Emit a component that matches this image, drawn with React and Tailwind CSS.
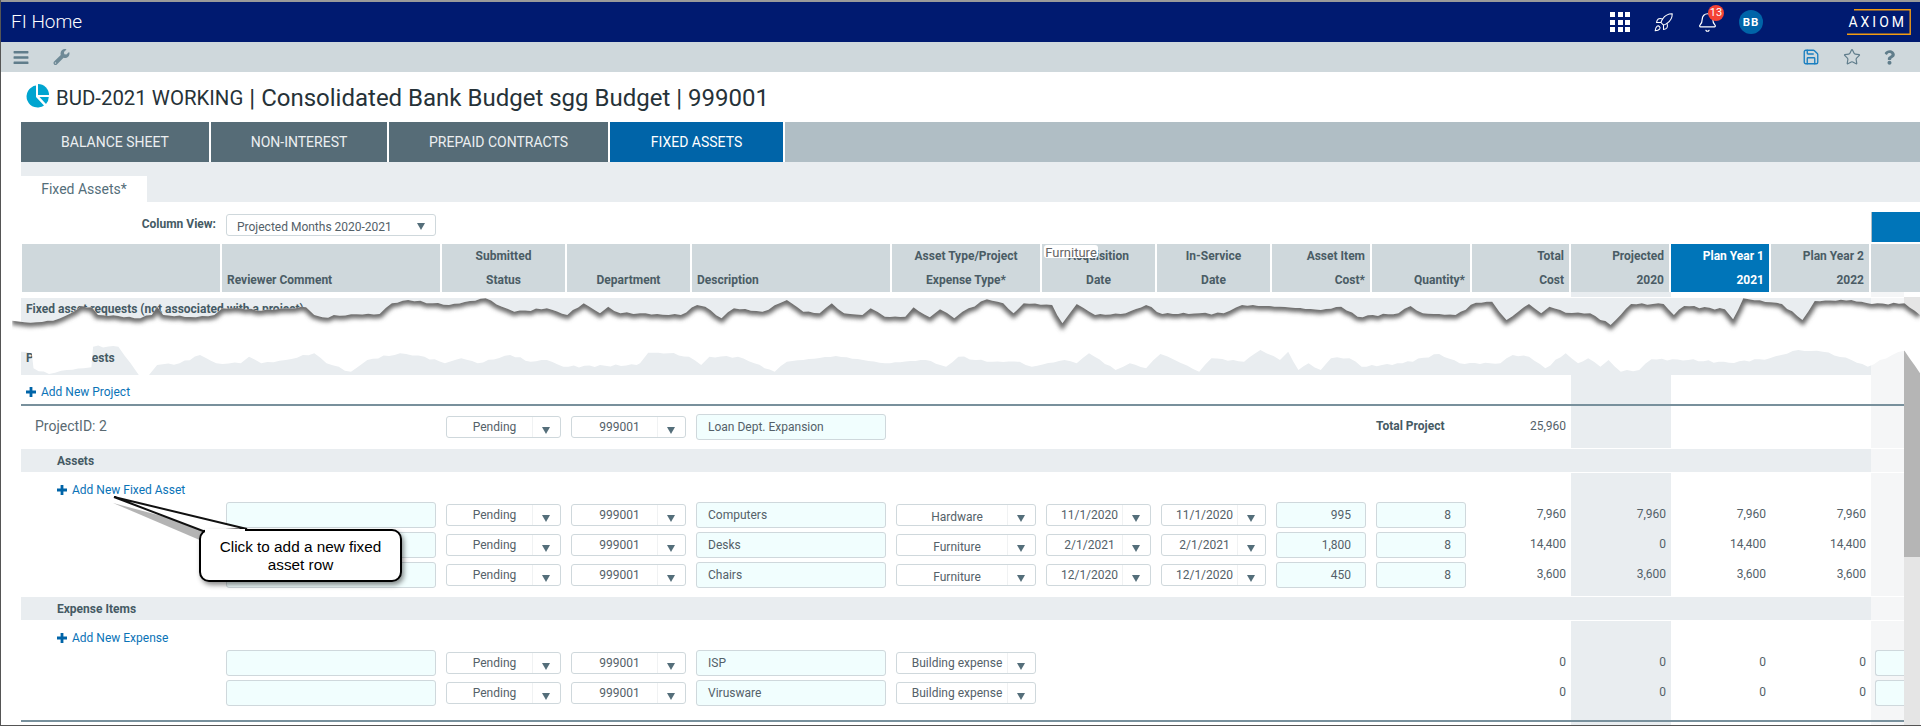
import React from "react";
import { Rocket, Bell, Save, Star } from "lucide-react";
import { FaBars, FaWrench, FaQuestion } from "react-icons/fa";

const G = "grid grid-cols-[201px_220px_125px_125px_200px_150px_115px_115px_100px_100px_99px_100px_100px_100px_1fr]";
const SHADE = "bg-[#e9edf0]";
const LIGHT = "bg-[#f5f6f7]";

const topEdge = [
  [0, [[30,362],[75,368],[130,362],[165,345],[200,318],[225,322],[240,345],[290,348],[330,355],[372,345],[385,320],[400,345],[480,352],[525,345],[545,325],[590,325],[640,332],[700,325],[750,322],[770,345],[790,352],[860,343],[930,342],[960,310],[1000,300],[1060,310],[1100,315],[1190,295],[1230,320],[1260,335],[1340,325],[1390,345],[1430,310],[1470,340],[1490,320],[1520,340]]],
  [640, [[0,340],[70,345],[100,345],[140,315],[160,320],[200,355],[230,325],[300,335],[360,300],[400,335],[440,340],[470,310],[500,340],[545,345],[565,325],[600,350],[650,350],[670,322],[710,352],[735,328],[770,355],[790,335],[850,298],[890,310],[915,340],[940,310],[1010,315],[1035,370],[1070,312],[1115,345],[1190,340],[1240,315],[1280,342],[1370,340],[1430,340],[1475,315]]],
  [1280, [[0,320],[100,330],[150,320],[190,350],[290,340],[320,318],[350,340],[430,345],[480,308],[520,305],[555,360],[610,312],[640,340],[660,320],[700,338],[760,340],[810,375],[860,312],[940,312],[965,345],[990,318],[1090,328],[1110,358],[1135,295],[1230,312],[1280,360],[1310,303],[1400,300],[1450,312],[1530,310],[1568,345]]],
];
const bottomEdge = [
  [0, [[30,450],[51,455],[78,460],[82,505],[120,522],[150,512],[205,505],[224,502],[228,440],[290,440],[320,490],[340,525],[365,525],[385,495],[440,490],[490,465],[530,490],[590,490],[610,470],[640,490],[700,480],[770,460],[800,490],[860,515],[900,480],[980,460],[1040,470],[1090,490],[1130,475],[1170,490],[1250,465],[1300,485],[1340,480],[1380,500],[1560,495]]],
  [640, [[0,490],[20,458],[70,460],[120,470],[150,495],[170,470],[240,470],[280,490],[330,515],[360,485],[480,468],[600,490],[700,480],[750,500],[780,470],[850,485],[930,485],[960,500],[1040,480],[1070,490],[1100,460],[1165,510],[1200,490],[1240,505],[1275,462],[1310,480],[1370,515],[1400,475],[1480,485],[1520,450]]],
  [1280, [[0,480],[20,455],[45,510],[70,490],[100,510],[125,475],[170,475],[200,500],[300,490],[390,462],[440,490],[540,490],[570,465],[610,470],[650,505],[700,460],[730,490],[755,475],[785,500],[805,480],[835,515],[880,510],[910,478],[1000,480],[1100,488],[1200,475],[1270,450],[1330,455],[1400,480],[1440,500],[1500,465],[1530,452],[1568,520]]],
];
const mapEdge = (e) =>
  e.flatMap(([ox, pts]) => pts.map(([x, y]) => [+(ox + x / 2.45 - 1).toFixed(1), +(200 + y / 3 - 298).toFixed(1)]));
// adds fine, repeatable roughness between the traced points of a torn edge
const roughen = (pts) => {
  const out = [];
  pts.forEach((p, i) => {
    out.push(p);
    const n = pts[i + 1];
    if (!n) return;
    const steps = Math.floor((n[0] - p[0]) / 5);
    for (let s = 1; s < steps; s++) {
      const t = s / steps;
      const noise = Math.sin(p[0] * 0.37 + s * 2.3) * 0.7 + Math.sin(p[0] * 1.3 + s * 4.1) * 0.4;
      out.push([+(p[0] + (n[0] - p[0]) * t).toFixed(1), +(p[1] + (n[1] - p[1]) * t + noise).toFixed(1)]);
    }
  });
  return out;
};
const topPts = roughen(mapEdge(topEdge));
const botPts = roughen(mapEdge(bottomEdge));
const str = (p) => p.map((q) => q.join(",")).join(" ");

function TornPaper() {
  const poly = str([...topPts, ...[...botPts].reverse()]);
  return (
    <svg className="absolute left-0 top-[6px] pointer-events-none" width="1919" height="78" viewBox="0 0 1919 78">
      <defs>
        <clipPath id="tornClip"><polygon points={poly} /></clipPath>
        <filter id="tornBlur" x="-2%" y="-100%" width="104%" height="300%"><feGaussianBlur stdDeviation="2.2" /></filter>
      </defs>
      <polygon points={poly} fill="#ffffff" />
      <g clipPath="url(#tornClip)">
        <polyline points={str(topPts)} fill="none" stroke="#6a6a6a" strokeWidth="8" filter="url(#tornBlur)" />
      </g>
    </svg>
  );
}

function Arrow() {
  return (
    <svg width="8" height="7" viewBox="0 0 8 7" className="mt-[6px] mr-[2px]"><path d="M0 0H8L4 7Z" fill="#546e7a" /></svg>
  );
}

function Plus() {
  return (
    <svg width="10" height="10" viewBox="0 0 10 10" className="mt-[3px] mr-[5px] shrink-0"><path d="M3.6 0H6.4V3.6H10V6.4H6.4V10H3.6V6.4H0V3.6H3.6Z" fill="#0064a8" /></svg>
  );
}

function Sel({ text, low }) {
  return (
    <div className="flex h-[22px] mt-[4px] w-full items-stretch rounded-[3px] border border-[#cfd8dc] bg-white">
      <div className={"flex flex-1 items-center justify-center pl-[10px] whitespace-nowrap " + (low ? "pt-[3px]" : "")}>{text}</div>
      <div className="flex w-[28px] shrink-0 items-center justify-center border-l border-[#f0f2f3]"><Arrow /></div>
    </div>
  );
}

function Inp({ text, right, cls = "" }) {
  return (
    <div className={"flex h-[26px] mt-[2px] w-full items-center rounded-[3px] border border-[#cfd8dc] bg-[#f1fefe] " + (right ? "justify-end pr-[14px] " : "pl-[11px] ") + cls}>{text}</div>
  );
}

const Val = ({ v, shade }) => (
  <div className={"flex h-full items-start justify-end pt-[6px] pr-[5px] leading-[16px] " + (shade ? SHADE : "")}>{v}</div>
);
const C = ({ children }) => <div className="pl-[4px] pr-[6px]">{children}</div>;

function AssetRow({ r }) {
  return (
    <div className={G + " h-[30px]"}>
      <div />
      <C><Inp /></C>
      <C><Sel text="Pending" /></C>
      <C><Sel text="999001" /></C>
      <C><Inp text={r.d} /></C>
      <C><Sel text={r.t} low /></C>
      <C><Sel text={r.a} /></C>
      <C><Sel text={r.a} /></C>
      <C><Inp text={r.c} right /></C>
      <C><Inp text="8" right /></C>
      <Val v={r.v[0]} />
      <Val v={r.v[1]} shade />
      <Val v={r.v[2]} />
      <Val v={r.v[3]} />
      <div className={LIGHT} />
    </div>
  );
}

function ExpenseRow({ d }) {
  return (
    <div className={G + " h-[30px]"}>
      <div />
      <C><Inp /></C>
      <C><Sel text="Pending" /></C>
      <C><Sel text="999001" /></C>
      <C><Inp text={d} /></C>
      <C><Sel text="Building expense" /></C>
      <div /><div /><div /><div />
      <Val v="0" />
      <Val v="0" shade />
      <Val v="0" />
      <Val v="0" />
      <div className={"pl-[4px] " + LIGHT}><Inp cls="rounded-r-none border-r-0" /></div>
    </div>
  );
}

function Section({ title }) {
  return (
    <div className={G + " h-[23px] mt-[1px] mb-[1px]"}>
      <div className={"col-span-14 flex items-center pl-[36px] font-bold text-[#455a64] " + SHADE}>{title}</div>
      <div className={LIGHT} />
    </div>
  );
}

function AddRow({ label, h }) {
  return (
    <div className={G + " " + h}>
      <div className="col-span-11 flex items-start pl-[36px] pt-[9px] leading-[16px] text-[#0a73b7]">
        <Plus />
        {label}
      </div>
      <div className={SHADE} />
      <div />
      <div />
      <div className={LIGHT} />
    </div>
  );
}

const Spacer = ({ h }) => (
  <div className={G + " " + h}>
    <div className="col-span-11" />
    <div className={SHADE} />
    <div />
    <div />
    <div className={LIGHT} />
  </div>
);

const heads = [
  ["", "", ""],
  ["", "Reviewer Comment", "text-left"],
  ["Submitted", "Status", "text-center"],
  ["", "Department", "text-center"],
  ["", "Description", "text-left"],
  ["Asset Type/Project", "Expense Type*", "text-center"],
  ["Acquisition", "Date", "text-center"],
  ["In-Service", "Date", "text-center"],
  ["Asset Item", "Cost*", "text-right"],
  ["", "Quantity*", "text-right"],
  ["Total", "Cost", "text-right"],
  ["Projected", "2020", "text-right"],
  ["Plan Year 1", "2021", "text-right"],
  ["Plan Year 2", "2022", "text-right"],
  ["", "", ""],
];

const assets = [
  { d: "Computers", t: "Hardware", a: "11/1/2020", c: "995", v: ["7,960", "7,960", "7,960", "7,960"] },
  { d: "Desks", t: "Furniture", a: "2/1/2021", c: "1,800", v: ["14,400", "0", "14,400", "14,400"] },
  { d: "Chairs", t: "Furniture", a: "12/1/2020", c: "450", v: ["3,600", "3,600", "3,600", "3,600"] },
];

export default function App() {
  return (
    <div className="relative h-[726px] w-full overflow-hidden border-b border-l border-[#555555] bg-white text-[12px] leading-[16px] text-[#546169] [font-family:Roboto,sans-serif]">
      <div className="h-[2px] bg-[#9a9a9a] mr-[1px]" />
      {/* top bar */}
      <div className="mr-[1px] flex h-[40px] items-center bg-[#001a70] text-white">
        <div className="pl-[10px] text-[19px] font-light">FI Home</div>
        <div className="ml-auto grid w-[20px] grid-cols-3 gap-[2.5px]">
          {Array.from({ length: 9 }).map((_, i) => <div key={i} className="h-[5px] w-[5px] bg-white" />)}
        </div>
        <Rocket className="ml-[23px] h-[21px] w-[21px]" strokeWidth={1.2} />
        <div className="relative ml-[23px] h-[20px] w-[20px]">
          <Bell className="h-[21px] w-[21px]" strokeWidth={1.4} />
          <div className="absolute -right-[7px] -top-[7px] flex h-[16px] w-[16px] items-center justify-center rounded-full bg-[#f44336] text-[11px] text-white">13</div>
        </div>
        <div className="ml-[22px] flex h-[24px] w-[24px] items-center justify-center rounded-full bg-[#0064a8] text-[11.5px] font-bold tracking-[1px]">BB</div>
        <div className="relative ml-[84px] mr-[9px] flex h-[26px] w-[64px] items-center justify-end pr-[4px] text-[14px] tracking-[3px]">
          <svg className="absolute left-0 top-0" width="64" height="26" viewBox="0 0 64 26" fill="none">
            <path d="M7 .7H63.2V25.2H0" stroke="#f39c12" strokeWidth="1.4" />
          </svg>
          AXIOM
        </div>
      </div>
      {/* toolbar */}
      <div className="mr-[1px] flex h-[30px] items-center bg-[#cfd8dc] text-[#607d8b]">
        <FaBars className="ml-[12px] h-[17px] w-[16px]" />
        <FaWrench className="ml-[24px] h-[16px] w-[17px] text-[#6f8a97]" />
        <Save className="ml-auto h-[18px] w-[18px] text-[#1a7fc0]" strokeWidth={1.8} />
        <Star className="ml-[23px] h-[18px] w-[18px]" strokeWidth={1.6} />
        <FaQuestion className="ml-[23px] mr-[25px] h-[15px] w-[11px]" />
      </div>
      {/* title */}
      <div className="flex h-[50px] items-center pl-[25px] pt-[1px] text-[#263238]">
        <svg width="23" height="24" viewBox="0 0 23 24" className="mb-[3px] mr-[7px]">
          <path d="M10 1.6A11 11 0 1 0 18 21.4L10 13Z" fill="#00a5d0" />
          <path d="M12 0A11 11 0 0 1 23 11H12Z" fill="#00a5d0" />
          <path d="M13.5 13H22.8A11 11 0 0 1 20 20Z" fill="#00a5d0" />
        </svg>
        <span className="text-[20.4px] leading-[26px]">BUD-2021 WORKING</span>
        <span className="ml-[6px] text-[24px] leading-[26px]">| Consolidated Bank Budget sgg Budget | 999001</span>
      </div>
      {/* main tabs */}
      <div className="mr-[1px] ml-[20px] flex h-[40px] gap-[2px] text-[14px] text-[#eceff1]">
        <div className="flex w-[188px] items-center justify-center bg-[#566c77]">BALANCE SHEET</div>
        <div className="flex w-[176px] items-center justify-center bg-[#566c77]">NON-INTEREST</div>
        <div className="flex w-[219px] items-center justify-center bg-[#566c77]">PREPAID CONTRACTS</div>
        <div className="flex w-[173px] items-center justify-center bg-[#0064a8] text-white">FIXED ASSETS</div>
        <div className="flex-1 bg-[#b0bec5]" />
      </div>
      <div className={"mr-[1px] ml-[20px] flex h-[40px] items-end " + SHADE}>
        <div className="flex h-[26px] w-[126px] items-center justify-center bg-white text-[14px] text-[#546e7a]">Fixed Assets*</div>
      </div>
      {/* column view */}
      <div className={"mr-[1px] ml-[20px] h-[42px] " + G}>
        <div className="pr-[6px] pt-[14px] text-right font-bold text-[#455a64]">Column View:</div>
        <div className="pl-[4px] pr-[6px] pt-[12px]">
          <div className="flex h-[22px] items-center rounded-[3px] border border-[#cfd8dc] bg-white pl-[10px] pr-[10px] pt-[3px]">
            <span className="flex-1">Projected Months 2020-2021</span>
            <svg width="8" height="7" viewBox="0 0 8 7"><path d="M0 0H8L4 7Z" fill="#546e7a" /></svg>
          </div>
        </div>
        <div className="col-span-12" />
        <div className="mt-[10px] h-[30px] border-l border-[#b0bec5] bg-[#0075b9]" />
      </div>
      {/* header row */}
      <div className={"mr-[1px] ml-[20px] h-[48px] font-bold text-[#4a5c65] " + G}>
        {heads.map(([a, b, al], i) => (
          <div
            key={i}
            className={
              "leading-[24px] " +
              (i === 0 ? "ml-[1px] " : "") +
              (i === 14 ? "bg-[#cfd8dc] " : "mr-[2px] ") +
              (i === 12 ? "bg-[#0075b9] text-white " : "bg-[#cfd8dc] ") +
              (al === "text-right" ? "pr-[5px] " : al === "text-left" ? "pl-[5px] " : "") +
              al
            }
          >
            <div className="h-[24px] whitespace-nowrap">{a}</div>
            <div className="h-[24px] whitespace-nowrap">{b}</div>
          </div>
        ))}
      </div>
      {/* body */}
      <div className="relative mr-[1px] flex">
        <div className="w-[1903px] shrink-0 pl-[20px]">
          <div className={G + " h-[5px]"}>
            <div className="col-span-11" />
            <div className="bg-[#e9edf0]" />
            <div />
            <div />
            <div className={LIGHT} />
          </div>
          <div className="h-[1px]" />
          <div className={G + " h-[77px]"}>
            <div className={"col-span-14 flex flex-col justify-between pl-[5px] font-bold text-[#455a64] " + SHADE}>
              <div className="pt-[3px] whitespace-nowrap">Fixed asset requests (not associated with a project)</div>
              <div className="pb-[9px] whitespace-nowrap">Project requests</div>
            </div>
            <div className={LIGHT} />
          </div>
          <div className={G + " h-[29px]"}>
            <div className="col-span-11 flex items-start pl-[5px] pt-[9px] leading-[16px] text-[#0a73b7]">
              <Plus />
              Add New Project
            </div>
            <div className={SHADE} />
            <div />
            <div />
            <div className={LIGHT} />
          </div>
          <div className="h-[2px] bg-[#78909c]" />
          <div className={G + " h-[42px]"}>
            <div className="pl-[14px] pt-[12px] text-[14px] text-[#5a6a72]">ProjectID: 2</div>
            <div />
            <div className="pl-[4px] pr-[6px] pt-[6px]"><Sel text="Pending" /></div>
            <div className="pl-[4px] pr-[6px] pt-[6px]"><Sel text="999001" /></div>
            <div className="pl-[4px] pr-[6px] pt-[6px]"><Inp text="Loan Dept. Expansion" /></div>
            <div />
            <div />
            <div />
            <div />
            <div className="pl-[4px] pt-[12px] font-bold text-[#455a64] whitespace-nowrap">Total Project</div>
            <div className="pr-[5px] pt-[12px] text-right">25,960</div>
            <div className={SHADE} />
            <div />
            <div />
            <div className={LIGHT} />
          </div>
          <Section title="Assets" />
          <AddRow label="Add New Fixed Asset" h="h-[27px]" />
          {assets.map((r) => <AssetRow key={r.d} r={r} />)}
          <Spacer h="h-[6px]" />
          <Section title="Expense Items" />
          <AddRow label="Add New Expense" h="h-[27px]" />
          <ExpenseRow d="ISP" />
          <ExpenseRow d="Virusware" />
          <Spacer h="h-[12px]" />
          <div className="h-[2px] bg-[#78909c]" />
          <Spacer h="h-[4px]" />
        </div>
        {/* scrollbar */}
        <div className="relative mt-[5px] w-[16px] bg-[#e5e5e5]">
          <div className="mt-[23px] h-[237px] bg-[#b5b5b5]" />
        </div>
        <TornPaper />
      </div>
      {/* ghost drop-down text */}
      <div className="absolute left-[1043px] top-[245px] flex h-[13px] w-[54px] items-center justify-center rounded-[3px] bg-white pt-[3px] text-[13px] text-[#666666]">Furniture</div>
      {/* callout */}
      <svg className="absolute left-[100px] top-[490px]" width="170" height="60" viewBox="0 0 170 60" fill="none">
        <path d="M15 9L104 47L150 45Z" fill="#777777" opacity=".55" transform="translate(-3 4)" />
        <path d="M13 7L102 41L146 39Z" fill="#ffffff" stroke="#111111" strokeWidth="2" />
      </svg>
      <div className="absolute left-[198px] top-[529px] flex h-[53px] w-[203px] items-center justify-center rounded-[10px] border-2 border-black bg-white text-center text-[15.3px] leading-[18px] text-black shadow-[2px_3px_5px_rgba(0,0,0,0.45)] [font-family:'Liberation_Sans',sans-serif]">
        <span>Click to add a new fixed<br />asset row</span>
      </div>
      <svg className="absolute left-[200px] top-[525px]" width="50" height="8" viewBox="0 0 50 8"><path d="M4 4H44V7H4Z" fill="#ffffff" /></svg>
    </div>
  );
}
